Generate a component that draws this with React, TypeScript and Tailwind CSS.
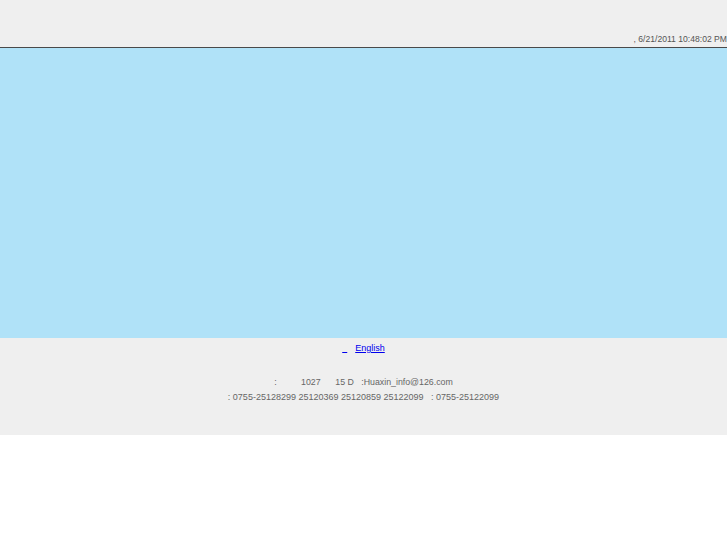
import React from 'react';

const App = () => {
  return (
    <div className="w-[727px] min-h-[545px] bg-white font-['Liberation_Sans',Arial,sans-serif]">
      {/* top bar */}
      <div className="h-[48px] bg-[#efefef] border-b border-[#4a4a4a] flex items-end justify-end pb-[1px]">
        <span className="text-[8.6px] text-[#555] whitespace-pre">, 6/21/2011 10:48:02 PM</span>
      </div>

      {/* main area */}
      <div className="h-[290px] bg-[#b0e2f8]" />

      {/* footer */}
      <div className="h-[97px] bg-[#efefef] flex flex-col items-center text-[8.8px] text-[#666] leading-[15px]">
        <div className="mt-[3px] flex gap-[8px] text-[9px]">
          <a href="#" className="text-[#0000ee] underline whitespace-pre">  </a>
          <a href="#" className="text-[#0000ee] underline">English</a>
        </div>
        <div className="mt-[19px] whitespace-pre">:          1027      15 D   :Huaxin_info@126.com</div>
        <div className="whitespace-pre text-[9px]">: 0755-25128299 25120369 25120859 25122099   : 0755-25122099</div>
      </div>
    </div>
  );
};

export default App;
